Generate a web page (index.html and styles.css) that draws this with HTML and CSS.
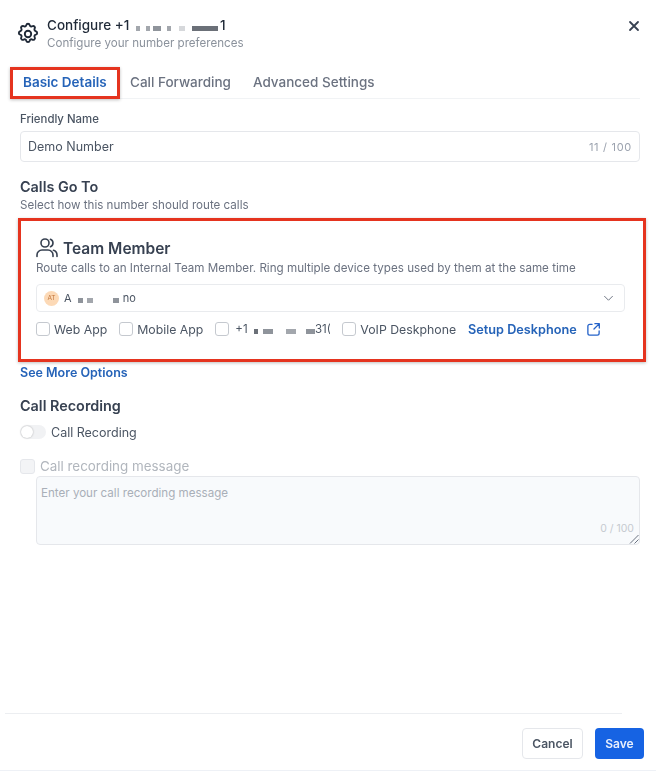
FILE: index.html
```html
<!DOCTYPE html>
<html lang="en">
<head>
    <meta charset="UTF-8">
    <meta name="viewport" content="width=device-width, initial-scale=1.0">
    <title>Configure Number</title>
    <link rel="stylesheet" href="styles.css">
</head>
<body>
    <div class="modal">
        <!-- Header -->
        <div class="header">
            <svg class="gear" viewBox="0 0 24 24" fill="none" stroke="#1f2937" stroke-width="1.9" stroke-linecap="round" stroke-linejoin="round">
                <path d="M10.3 3.1c.4-1.8 3-1.8 3.4 0a1.7 1.7 0 0 0 2.6 1.1c1.5-.9 3.3.8 2.4 2.4a1.7 1.7 0 0 0 1.1 2.6c1.8.4 1.8 3 0 3.4a1.7 1.7 0 0 0-1.1 2.6c.9 1.5-.8 3.3-2.4 2.4a1.7 1.7 0 0 0-2.6 1.1c-.4 1.8-3 1.8-3.4 0a1.7 1.7 0 0 0-2.6-1.1c-1.5.9-3.3-.8-2.4-2.4a1.7 1.7 0 0 0-1.1-2.6c-1.8-.4-1.8-3 0-3.4a1.7 1.7 0 0 0 1.1-2.6c-.9-1.5.8-3.3 2.4-2.4a1.7 1.7 0 0 0 2.6-1.1z"/>
                <circle cx="12" cy="12" r="3.2"/>
            </svg>
            <div class="header-text">
                <div class="title">Configure +1 <span class="redact"><i class="px w4 mid"></i><i class="px w6 gap"></i><i class="px w4 mid"></i><i class="px w3 gap"></i><i class="px w8 dim"></i><i class="px w6 gap"></i><i class="px w4 mid"></i><i class="px w8 gap"></i><i class="px w6 pale"></i><i class="px w7 gap"></i><i class="px w26 dark"></i></span>1</div>
                <div class="subtitle">Configure your number preferences</div>
            </div>
            <svg class="close" viewBox="0 0 12 12" fill="none" stroke="#374151" stroke-width="1.8" stroke-linecap="round">
                <path d="M2 2l8 8M10 2l-8 8"/>
            </svg>
        </div>

        <!-- Tabs -->
        <div class="tabs">
            <div class="tab tab-active">Basic Details</div>
            <div class="tab">Call Forwarding</div>
            <div class="tab">Advanced Settings</div>
        </div>

        <!-- Friendly name -->
        <label class="field-label">Friendly Name</label>
        <div class="input-box">
            <span>Demo Number</span>
            <span class="count">11 / 100</span>
        </div>

        <h3 class="section-title calls-title">Calls Go To</h3>
        <p class="section-sub">Select how this number should route calls</p>

        <!-- Team member card -->
        <div class="team-card">
            <div class="team-head">
                <svg class="team-icon" viewBox="0 0 22 20" fill="none" stroke="#374151" stroke-width="1.6" stroke-linecap="round">
                    <circle cx="9" cy="5" r="4"/>
                    <path d="M1 18.5v-1.5a5 5 0 0 1 5-5h6a5 5 0 0 1 5 5v1.5"/>
                    <path d="M14.5 1.3a4 4 0 0 1 0 7.4M17.5 12.3a5 5 0 0 1 3.500 4.700v1.500"/>
                </svg>
                <span>Team Member</span>
            </div>
            <p class="team-desc">Route calls to an Internal Team Member. Ring multiple device types used by them at the same time</p>
            <div class="select-box">
                <span class="avatar">AT</span>
                <span class="select-name">A <span class="redact small"><i class="px w5 dim"></i><i class="px w4 gap"></i><i class="px w6 mid"></i><i class="px w20 gap"></i><i class="px w6 dim"></i><i class="px w4 gap"></i></span>no</span>
                <svg class="chevron" viewBox="0 0 12 8" fill="none" stroke="#6b7280" stroke-width="1.1" stroke-linecap="round" stroke-linejoin="round">
                    <path d="M1.500 1.500L6 6l4.500-4.500"/>
                </svg>
            </div>
            <div class="devices">
                <label class="device"><span class="check"></span>Web App</label>
                <label class="device"><span class="check"></span>Mobile App</label>
                <label class="device"><span class="check"></span><span class="phone-num">+1 <span class="redact small"><i class="px w4 dark"></i><i class="px w5 gap"></i><i class="px w10 dim"></i><i class="px w13 gap"></i><i class="px w10 mid"></i><i class="px w10 gap"></i><i class="px w9 dim"></i></span>31(</span></label>
                <label class="device"><span class="check"></span>VoIP Deskphone</label>
                <a class="setup-link">Setup Deskphone</a>
                <svg class="ext" viewBox="0 0 16 16" fill="none" stroke="#2563c9" stroke-width="1.4" stroke-linecap="round" stroke-linejoin="round">
                    <path d="M6.500 2.500H4a2 2 0 0 0-2 2V12a2 2 0 0 0 2 2h8a2 2 0 0 0 2-2V9.500"/>
                    <path d="M9.500 1.800h4.700v4.700M14 2l-5.500 5.500"/>
                </svg>
            </div>
        </div>

        <a class="more-link">See More Options</a>

        <h3 class="section-title rec-title">Call Recording</h3>
        <div class="toggle-row">
            <span class="toggle"><span class="knob"></span></span>
            <span>Call Recording</span>
        </div>

        <div class="msg-row">
            <span class="check check-off"></span>
            <span>Call recording message</span>
        </div>
        <div class="msg-box">
            <span>Enter your call recording message</span>
            <span class="msg-count">0 / 100</span>
            <svg class="grip" viewBox="0 0 10 10" fill="none" stroke="#6b7280" stroke-width="1">
                <path d="M1 9.500L9.500 1M5.500 9.500L9.500 5.500"/>
            </svg>
        </div>

        <div class="spacer"></div>

        <!-- Footer -->
        <div class="footer">
            <button class="btn btn-cancel">Cancel</button>
            <button class="btn btn-save">Save</button>
        </div>
    </div>
</body>
</html>
```

FILE: styles.css
```css
* {
    box-sizing: border-box;
}
body {
    margin: 0;
    background: #fff;
    font-family: Inter, "Liberation Sans", sans-serif;
    color: #374151;
}
.modal {
    width: 656px;
    height: 771px;
    padding: 0 16px 0 20px;
    display: flex;
    flex-direction: column;
    overflow: hidden;
    border-bottom: 1px solid #eef1f6;
    filter: blur(0.35px);
}
.header {
    display: flex;
    align-items: flex-start;
    padding-top: 16px;
    margin-left: -4px;
    height: 67px;
}
.gear {
    width: 24px;
    height: 24px;
    margin-top: 6px;
    flex: none;
}
.header-text {
    margin-left: 7px;
    flex: 1;
}
.title {
    font-size: 13.5px;
    font-weight: 500;
    line-height: 18px;
    color: #1f2937;
}
.subtitle {
    font-size: 11.6px;
    line-height: 16px;
    margin-top: 1px;
    color: #8b929c;
}
.close {
    width: 12px;
    height: 12px;
    margin: 4px 0 0 0;
}
.redact {
    display: inline-flex;
    align-items: center;
    height: 10px;
    vertical-align: -1px;
    margin: 0 2px 0 3px;
}
.redact.small {
    margin: 0 0 0 3px;
}
.px {
    display: block;
    height: 5px;
}
.w3 { width: 3px; }
.w4 { width: 4px; }
.w5 { width: 5px; }
.w6 { width: 6px; }
.w7 { width: 7px; }
.w8 { width: 8px; }
.w9 { width: 9px; }
.w10 { width: 10px; }
.w13 { width: 13px; }
.w20 { width: 20px; }
.w26 { width: 26px; }
.dark { background: #6b7078; }
.dim { background: #8f949b; }
.mid { background: #a3a7ad; }
.pale { background: #d6d8db; }
.gap { background: transparent; }

.tabs {
    display: flex;
    align-items: stretch;
    height: 32px;
    margin-left: -10px;
    border-bottom: 1px solid #f1f3f5;
    font-size: 13.5px;
}
.tab {
    display: flex;
    align-items: center;
    padding: 0 11px 2px;
    font-weight: 500;
    color: #6b7280;
}
.tab-active {
    width: 110px;
    height: 32px;
    padding: 0 0 2px 10px;
    margin-right: 10px;
    color: #2563b8;
    font-weight: 600;
    border: 3px solid #e5341f;
    box-shadow: 0 1px 3px rgba(0, 0, 0, 0.25);
}
.tab-active + .tab {
    padding-left: 0;
}
.field-label {
    display: block;
    font-size: 11.4px;
    font-weight: 500;
    line-height: 14px;
    margin-top: 13px;
    color: #4b5563;
}
.input-box {
    display: flex;
    justify-content: space-between;
    align-items: center;
    height: 31px;
    margin-top: 5px;
    padding: 0 7px;
    border: 1px solid #e5e7eb;
    border-radius: 4px;
    font-size: 12.500px;
    color: #4b5563;
}
.count {
    font-size: 11px;
    letter-spacing: 0.7px;
    color: #9ca3af;
}
.section-title {
    margin: 0;
    font-size: 14.4px;
    font-weight: 600;
    line-height: 16px;
    color: #374151;
}
.calls-title {
    margin-top: 17px;
}
.section-sub {
    margin: 3px 0 0;
    font-size: 11.6px;
    line-height: 14px;
    color: #6b7280;
}
.team-card {
    margin: 6px -6px 0 -2px;
    height: 144px;
    padding: 16px 0 0 15px;
    border: 3px solid #e5341f;
    box-shadow: 0 1px 3px rgba(0, 0, 0, 0.25);
}
.team-head {
    display: flex;
    align-items: center;
    gap: 5px;
    height: 22px;
    font-size: 15.500px;
    font-weight: 600;
    color: #374151;
}
.team-icon {
    width: 22px;
    height: 20px;
}
.team-desc {
    margin: 2px 0 0;
    font-size: 11.640px;
    line-height: 15px;
    color: #6b7280;
}
.select-box {
    display: flex;
    align-items: center;
    width: 589px;
    height: 28px;
    margin-top: 8px;
    padding: 0 7px;
    border: 1px solid #e9ebee;
    border-radius: 4px;
    font-size: 11px;
    color: #4b5563;
}
.avatar {
    display: flex;
    align-items: center;
    justify-content: center;
    width: 15px;
    height: 15px;
    margin-right: 5px;
    border-radius: 50%;
    background: #fcd9b6;
    color: #c2763c;
    font-size: 6.500px;
}
.select-name {
    flex: 1;
}
.chevron {
    width: 11px;
    height: 7px;
    margin-right: 3px;
}
.devices {
    display: flex;
    align-items: center;
    height: 18px;
    margin-top: 8px;
    font-size: 12.300px;
    color: #4b5563;
}
.device {
    display: flex;
    align-items: center;
    gap: 4px;
    margin-right: 12px;
}
.phone-num {
    font-size: 11.500px;
    margin-left: 2px;
    width: 95px;
    white-space: nowrap;
    overflow: hidden;
}
.check {
    display: block;
    flex: none;
    width: 14px;
    height: 14px;
    border: 1px solid #c5c9cf;
    border-radius: 3px;
    background: #fff;
}
.setup-link {
    font-weight: 600;
    font-size: 12.700px;
    color: #2563b8;
}
.ext {
    width: 15px;
    height: 15px;
    margin-left: 9px;
}
.more-link {
    display: block;
    margin-top: 4px;
    font-size: 12.500px;
    line-height: 14px;
    font-weight: 600;
    color: #2563b8;
}
.rec-title {
    margin-top: 18px;
}
.toggle-row {
    display: flex;
    align-items: center;
    gap: 5px;
    margin-top: 11px;
    height: 14px;
    font-size: 12.500px;
    color: #4b5563;
}
.toggle {
    display: block;
    width: 26px;
    height: 14px;
    border-radius: 7px;
    background: #f1f2f4;
}
.knob {
    display: block;
    width: 12px;
    height: 12px;
    margin: 1px;
    border-radius: 50%;
    background: #fff;
    box-shadow: 0 0 2px rgba(0, 0, 0, 0.3);
}
.msg-row {
    display: flex;
    align-items: center;
    gap: 5px;
    margin-top: 19px;
    height: 16px;
    font-size: 13.400px;
    color: #b1b6bd;
}
.check-off {
    width: 15px;
    height: 15px;
    background: #f3f4f6;
    border-color: #e5e7eb;
}
.msg-box {
    position: relative;
    height: 69px;
    margin: 2px 0 0 16px;
    padding: 9px 4px;
    background: #f8fafc;
    border: 1px solid #e5e7eb;
    border-radius: 4px;
    font-size: 11.600px;
    color: #a9afb8;
}
.msg-count {
    position: absolute;
    right: 5px;
    bottom: 9px;
    font-size: 10.500px;
    color: #c6cad0;
}
.grip {
    position: absolute;
    right: 0;
    bottom: 0;
    width: 10px;
    height: 10px;
}
.spacer {
    flex: 1;
}
.footer {
    display: flex;
    justify-content: flex-end;
    gap: 12px;
    height: 58px;
    padding-top: 15px;
    margin: 0 -4px 0 -15px;
    border-top: 1px solid transparent;
    background: linear-gradient(#eceef1, #eceef1) top left / 617px 1px no-repeat;
}
.btn {
    height: 31px;
    border-radius: 4px;
    font-family: inherit;
    font-size: 12px;
    font-weight: 600;
}
.btn-cancel {
    width: 61px;
    background: #fff;
    border: 1px solid #e5e7eb;
    color: #4b5563;
}
.btn-save {
    width: 49px;
    background: #1663e3;
    border: none;
    color: #e8effc;
}
```
